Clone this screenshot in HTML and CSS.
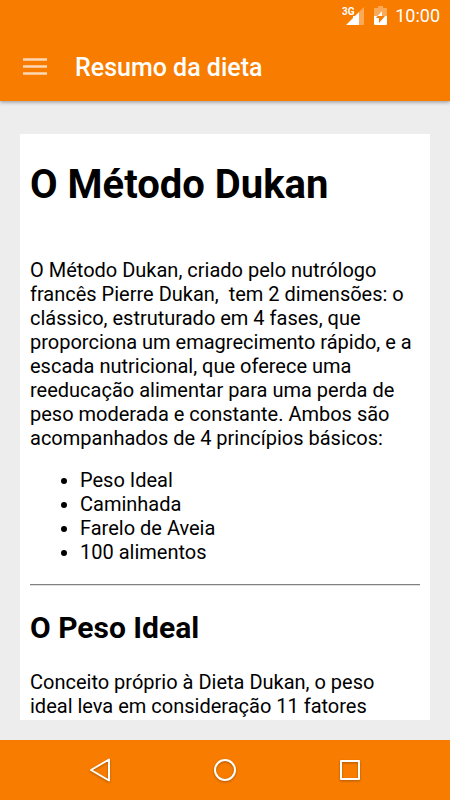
FILE: index.html
```html
<!DOCTYPE html>
<html lang="pt-BR">
<head>
    <meta charset="UTF-8">
    <meta name="viewport" content="width=device-width, initial-scale=1.0">
    <title>Resumo da dieta</title>
    <link rel="stylesheet" href="styles.css">
</head>
<body>

<header class="app-header">
    <div class="status-bar">
        <svg class="signal-icon" width="24" height="20" viewBox="0 0 24 20" aria-hidden="true">
            <path d="M24 1V19H19V6z" fill="#fff" opacity="0.35"/>
            <path d="M19 6V19H6L13 12V10H15z" fill="#fff"/>
            <text class="network" x="2" y="9">3G</text>
        </svg>
        <svg class="battery-icon" width="13" height="20" viewBox="0 0 13 20" aria-hidden="true">
            <path d="M0 3Q0 2 1 2H4V0H9V2H12Q13 2 13 3V10H0z" fill="#fff" opacity="0.35"/>
            <path d="M0 10H13V18Q13 19 12 19H1Q0 19 0 18z" fill="#fff"/>
            <path d="M2 12L8 5V10H11L5 17V12z" fill="#f77c00"/>
            <path d="M3.5 10L8 5V10z" fill="#fff"/>
        </svg>
        <span class="clock">10:00</span>
    </div>
    <div class="toolbar">
        <button class="menu-button" type="button" aria-label="Menu">
            <svg width="24" height="18" viewBox="0 0 24 18">
                <path d="M0 1.5H24M0 8.5H24M0 15.5H24" stroke="#fff" stroke-width="2.5" opacity="0.7"/>
            </svg>
        </button>
        <span class="title">Resumo da dieta</span>
    </div>
</header>

<main class="content">
    <article class="card">
        <h1>O Método Dukan</h1>
        <p>O Método Dukan, criado pelo nutrólogo francês Pierre Dukan,&nbsp; tem 2 dimensões: o clássico, estruturado em 4 fases, que proporciona um emagrecimento rápido, e a escada nutricional, que oferece uma reeducação alimentar para uma perda de peso moderada e constante. Ambos são acompanhados de 4 princípios básicos:</p>
        <ul>
            <li>Peso Ideal</li>
            <li>Caminhada</li>
            <li>Farelo de Aveia</li>
            <li>100 alimentos</li>
        </ul>
        <hr>
        <h2>O Peso Ideal</h2>
        <p>Conceito próprio à Dieta Dukan, o peso ideal leva em consideração 11 fatores</p>
    </article>
</main>

<nav class="nav-bar">
    <button class="nav-button" type="button" aria-label="Voltar">
        <svg width="26" height="26" viewBox="0 0 26 26">
            <path d="M22 2.5V23.5L4 13z"/>
        </svg>
    </button>
    <button class="nav-button" type="button" aria-label="Início">
        <svg width="26" height="26" viewBox="0 0 26 26">
            <circle cx="13" cy="13" r="10"/>
        </svg>
    </button>
    <button class="nav-button" type="button" aria-label="Recentes">
        <svg width="26" height="26" viewBox="0 0 26 26">
            <path d="M4 4H22V22H4z"/>
        </svg>
    </button>
</nav>

</body>
</html>
```

FILE: styles.css
```css
* {
    box-sizing: border-box;
}
body {
    display: flex;
    flex-direction: column;
    height: 100vh;
    margin: 0;
    font-family: Roboto, sans-serif;
    font-size: 20px;
    line-height: 24px;
    color: #000;
    background-color: #ededed;
}
button {
    display: flex;
    padding: 0;
    border: none;
    background: none;
    cursor: pointer;
}
.app-header {
    color: #fff;
    background-color: #f77c00;
    box-shadow: 0 1px 4px rgba(0, 0, 0, 0.4);
}
.status-bar {
    display: flex;
    align-items: center;
    justify-content: flex-end;
    height: 32px;
    padding-right: 10px;
}
.network {
    font-size: 10px;
    font-weight: bold;
    fill: #fff;
}
.signal-icon {
    margin-right: 10px;
}
.battery-icon {
    margin-right: 8px;
}
.clock {
    font-size: 18px;
}
.toolbar {
    display: flex;
    align-items: center;
    height: 69px;
    padding: 0 23px;
    gap: 28px;
}
.title {
    padding-top: 2px;
    font-size: 25px;
    font-weight: 500;
    line-height: 32px;
}
.content {
    flex: 1;
    min-height: 0;
    padding: 33px 20px 20px;
}
.card {
    height: 100%;
    padding: 0 10px;
    overflow: hidden;
    background-color: #fff;
}
h1 {
    margin: 27px 0 49px;
    font-size: 40px;
    line-height: 48px;
}
h2 {
    margin: 24px 0;
    font-size: 30px;
    line-height: 36px;
}
p {
    margin: 0;
}
ul {
    margin: 18px 0;
    padding-left: 50px;
}
hr {
    margin: 20px 0 24px;
    border: solid #808080;
    border-width: 1px 0;
    border-bottom-color: #e0e0e0;
}
/* Android navigation keys */
.nav-bar {
    display: flex;
    align-items: center;
    justify-content: center;
    gap: 99px;
    height: 60px;
    background-color: #f77c00;
}
.nav-button svg {
    fill: none;
    stroke: #fff;
    stroke-width: 2;
    stroke-linejoin: round;
    filter: drop-shadow(0 1px 1px rgba(0, 0, 0, 0.3));
}
```
